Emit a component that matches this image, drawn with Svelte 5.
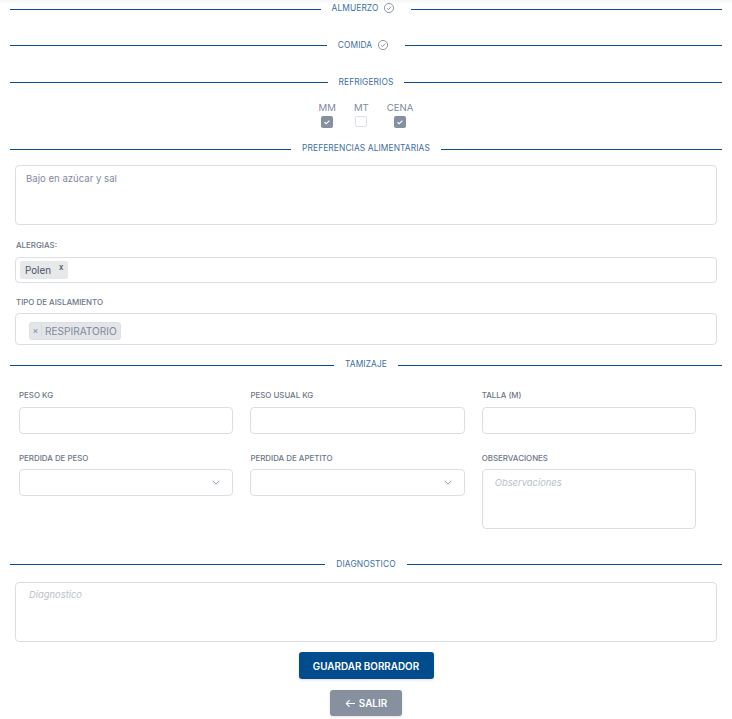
<script>
	const checks = [
		{ label: 'MM', on: true },
		{ label: 'MT', on: false },
		{ label: 'CENA', on: true }
	];
</script>

{#snippet tick()}
	<svg class="tick" viewBox="0 0 12 12" width="12" height="12" fill="none">
		<circle cx="6" cy="6" r="4.6" stroke="#7f8a9c" stroke-width="0.9" />
		<path d="M3.9 6.2l1.5 1.4 2.8-2.9" stroke="#7f8a9c" stroke-width="0.9" />
	</svg>
{/snippet}

{#snippet chevron()}
	<svg class="chevron" viewBox="0 0 10 6" width="8" height="5" fill="none">
		<path d="M1 1l4 4 4-4" stroke="#7f8a9c" stroke-width="1.1" />
	</svg>
{/snippet}

<div class="page">
	<div class="divider d-almuerzo"><span>ALMUERZO {@render tick()}</span></div>
	<div class="divider d-comida"><span>COMIDA {@render tick()}</span></div>
	<div class="divider d-refri"><span>REFRIGERIOS</span></div>

	<div class="checks">
		{#each checks as c}
			<div class="check">
				<span class="check-label">{c.label}</span>
				<span class="box" class:on={c.on}>
					{#if c.on}
						<svg viewBox="0 0 12 12" width="12" height="12" fill="none">
							<path d="M3.5 6.3l1.7 1.5 3.2-3.2" stroke="#fff" stroke-width="1.2" />
						</svg>
					{/if}
				</span>
			</div>
		{/each}
	</div>

	<div class="divider d-pref"><span>PREFERENCIAS ALIMENTARIAS</span></div>

	<div class="wide">
		<div class="area pref">Bajo en azúcar y sal</div>

		<div class="label l-alergias">ALERGIAS:</div>
		<div class="input tags-alergias">
			<span class="tag-polen">Polen <i>x</i></span>
		</div>

		<div class="label l-aisl">TIPO DE AISLAMIENTO</div>
		<div class="input tags-aisl">
			<span class="tag-resp"><b>×</b><em>RESPIRATORIO</em></span>
		</div>
	</div>

	<div class="divider d-tam"><span>TAMIZAJE</span></div>

	<div class="grid">
		<div class="field">
			<div class="label">PESO KG</div>
			<div class="input box-27"></div>
		</div>
		<div class="field">
			<div class="label">PESO USUAL KG</div>
			<div class="input box-27"></div>
		</div>
		<div class="field">
			<div class="label">TALLA (M)</div>
			<div class="input box-27"></div>
		</div>
		<div class="field second">
			<div class="label">PERDIDA DE PESO</div>
			<div class="input box-27 select">{@render chevron()}</div>
		</div>
		<div class="field second">
			<div class="label">PERDIDA DE APETITO</div>
			<div class="input box-27 select">{@render chevron()}</div>
		</div>
		<div class="field second">
			<div class="label">OBSERVACIONES</div>
			<div class="area obs placeholder">Observaciones</div>
		</div>
	</div>

	<div class="divider d-diag"><span>DIAGNOSTICO</span></div>

	<div class="wide">
		<div class="area diag placeholder">Diagnostico</div>
	</div>

	<div class="actions">
		<button class="btn primary">GUARDAR BORRADOR</button>
		<button class="btn secondary">
			<svg viewBox="0 0 12 10" width="11" height="9" fill="none">
				<path d="M11 5H1.5M5 1.2L1.3 5 5 8.8" stroke="#fff" stroke-width="1.2" />
			</svg>
			SALIR
		</button>
	</div>
</div>

<style>
	:global(body) {
		background: #fff;
		font-family: Inter, "Liberation Sans", sans-serif;
	}

	.page {
		width: 732px;
		height: 719px;
		box-sizing: border-box;
		padding: 3px 10px 0;
		overflow: hidden;
		background: linear-gradient(#f4f5f5 0, #fff 4px);
	}

	.divider {
		display: flex;
		align-items: center;
		height: 12px;
		width: 712px;
		font-size: 8.4px;
		color: #3c6ea3;
	}
	.divider::before,
	.divider::after {
		content: "";
		flex: 1;
		height: 1px;
		background: #0b4f8c;
	}
	.divider span {
		display: flex;
		align-items: center;
		gap: 5px;
		padding: 0 11px;
		letter-spacing: 0.1px;
	}

	.d-almuerzo {
		margin-bottom: 24px;
	}
	.d-almuerzo span {
		padding: 0 16px 2px 11px;
	}
	.d-comida {
		margin-bottom: 25px;
	}
	.d-comida span {
		padding: 0 16px 0 11px;
	}
	.d-refri {
		margin-bottom: 14px;
	}
	.d-pref {
		margin-top: 16px;
		margin-bottom: 10px;
	}
	.d-pref span {
		padding-bottom: 3px;
	}
	.d-tam {
		margin-top: 14px;
		margin-bottom: 19px;
	}
	.d-tam span {
		padding-bottom: 2px;
	}
	.d-diag {
		margin-top: 29px;
		margin-bottom: 12px;
	}

	.checks {
		display: flex;
		justify-content: center;
		gap: 18px;
		height: 25px;
	}
	.check {
		display: flex;
		flex-direction: column;
		align-items: center;
		gap: 3px;
	}
	.check-label {
		font-size: 9.6px;
		line-height: 11px;
		color: #7f8a9c;
	}
	.box {
		display: block;
		width: 12px;
		height: 12px;
		box-sizing: border-box;
		border: 1px solid #dde1e6;
		border-radius: 2px;
		background: #fff;
	}
	.box.on {
		border: 0;
		background: #87909f;
	}
	.box svg {
		display: block;
	}

	.wide {
		padding: 0 5px;
		width: 702px;
	}

	.area,
	.input {
		box-sizing: border-box;
		border: 1px solid #dbdfe4;
		border-radius: 4px;
		background: #fff;
	}
	.area {
		padding: 7px 10px;
		font-size: 9.6px;
		line-height: 12px;
		color: #7f8a9c;
	}
	.pref {
		height: 60px;
	}
	.diag {
		height: 60px;
		padding-top: 6px;
		padding-left: 13px;
	}
	.obs {
		height: 60px;
		padding-left: 12px;
	}
	.placeholder {
		color: #b9c0ca;
		font-style: italic;
		font-size: 9.4px;
	}

	.label {
		font-size: 7.9px;
		font-weight: 500;
		line-height: 10px;
		color: #6b7686;
	}
	.l-alergias {
		margin-top: 15px;
		margin-bottom: 7px;
		margin-left: 1px;
	}
	.l-aisl {
		margin-top: 14px;
		margin-bottom: 6px;
		margin-left: 1px;
	}

	.tags-alergias {
		height: 26px;
		display: flex;
		align-items: center;
		padding-left: 4px;
	}
	.tag-polen {
		display: flex;
		align-items: flex-start;
		gap: 8px;
		background: #e6e8ea;
		border-radius: 2px;
		height: 18px;
		padding: 0 5px;
		font-size: 9.8px;
		line-height: 19px;
		color: #4a5464;
		box-sizing: border-box;
	}
	.tag-polen i {
		font-style: normal;
		font-size: 8px;
		line-height: 12px;
		color: #2f3744;
	}

	.tags-aisl {
		height: 32px;
		display: flex;
		align-items: center;
		padding-left: 13px;
		padding-top: 3px;
		box-sizing: border-box;
	}
	.tag-resp {
		display: flex;
		align-items: center;
		height: 18px;
		background: #e3e5e8;
		border: 1px solid #dcdfe3;
		border-radius: 3px;
		box-sizing: border-box;
		font-size: 10.1px;
		color: #7f8a9c;
	}
	.tag-resp b {
		font-weight: 400;
		width: 11px;
		text-align: center;
		font-size: 9px;
		border-right: 1px solid #d6d9dd;
		margin-right: 3px;
		padding-right: 0;
	}
	.tag-resp em {
		font-style: normal;
		padding-right: 3px;
	}

	.grid {
		display: grid;
		grid-template-columns: repeat(3, 214.2px);
		column-gap: 17.2px;
		row-gap: 19px;
		padding-left: 9px;
		align-items: start;
	}
	.field .label {
		margin-bottom: 7px;
	}
	.field.second .label {
		margin-bottom: 6px;
	}
	.box-27 {
		height: 27px;
	}
	.select {
		display: flex;
		align-items: center;
		justify-content: flex-end;
		padding-right: 12px;
	}
	.chevron {
		display: block;
	}

	.actions {
		display: flex;
		flex-direction: column;
		align-items: center;
		gap: 11px;
		margin-top: 10px;
	}
	.btn {
		display: flex;
		align-items: center;
		justify-content: center;
		gap: 3px;
		border: 0;
		border-radius: 3px;
		color: #fff;
		font-family: inherit;
		font-size: 9.9px;
		font-weight: 600;
		box-shadow: 0 1px 3px rgba(0, 0, 0, 0.12);
	}
	.primary {
		width: 135px;
		height: 27px;
		background: #004c8c;
	}
	.secondary {
		width: 72px;
		height: 26px;
		background: #87909f;
	}
</style>
